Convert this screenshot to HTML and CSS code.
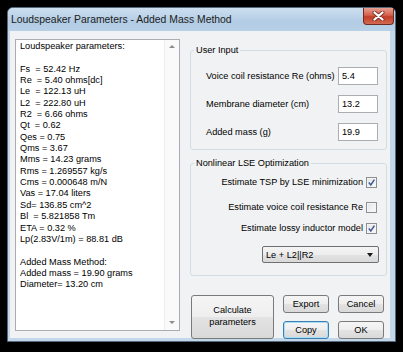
FILE: index.html
```html
<!DOCTYPE html>
<html lang="en">
<head>
    <meta charset="UTF-8">
    <title>Loudspeaker Parameters - Added Mass Method</title>
    <link rel="stylesheet" href="styles.css">
</head>
<body>
    <div class="window">
        <div class="titlebar">
            <span class="title">Loudspeaker Parameters - Added Mass Method</span>
            <span class="close-btn">
                <svg width="13" height="10" viewBox="0 0 13 10">
                    <path d="M2.5 1.5 L10.5 8.5 M10.5 1.5 L2.5 8.5" stroke="#7a3128" stroke-width="4" stroke-linecap="round"/>
                    <path d="M2.5 1.5 L10.5 8.5 M10.5 1.5 L2.5 8.5" stroke="#fff" stroke-width="2.3" stroke-linecap="round"/>
                </svg>
            </span>
        </div>
        <div class="client">
            <div class="results">
                <div class="results-text">Loudspeaker parameters:

Fs  = 52.42 Hz
Re  = 5.40 ohms[dc]
Le  = 122.13 uH
L2  = 222.80 uH
R2  = 6.66 ohms
Qt  = 0.62
Qes = 0.75
Qms = 3.67
Mms = 14.23 grams
Rms = 1.269557 kg/s
Cms = 0.000648 m/N
Vas = 17.04 liters
Sd= 136.85 cm^2
Bl  = 5.821858 Tm
ETA = 0.32 %
Lp(2.83V/1m) = 88.81 dB

Added Mass Method:
Added mass = 19.90 grams
Diameter= 13.20 cm</div>
                <div class="scrollbar">
                    <span class="arrow-up"></span>
                    <span class="arrow-down"></span>
                </div>
            </div>

            <div class="side">
                <fieldset class="group">
                    <legend>User Input</legend>
                    <div class="group-body inputs">
                        <div class="field-row">
                            <label>Voice coil resistance Re (ohms)</label>
                            <input type="text" value="5.4">
                        </div>
                        <div class="field-row">
                            <label>Membrane diameter (cm)</label>
                            <input type="text" value="13.2">
                        </div>
                        <div class="field-row">
                            <label>Added mass (g)</label>
                            <input type="text" value="19.9">
                        </div>
                    </div>
                </fieldset>

                <fieldset class="group lse">
                    <legend>Nonlinear LSE Optimization</legend>
                    <div class="group-body options">
                        <div class="check-row">
                            <span>Estimate TSP by LSE minimization</span>
                            <span class="checkbox"><svg width="9" height="9" viewBox="0 0 9 9"><path d="M1.8 4.6 L3.8 7 L7.4 1.6" fill="none" stroke="#3f5a98" stroke-width="1.5"/></svg></span>
                        </div>
                        <div class="check-row second">
                            <span>Estimate voice coil resistance Re</span>
                            <span class="checkbox"></span>
                        </div>
                        <div class="check-row third">
                            <span>Estimate lossy inductor model</span>
                            <span class="checkbox"><svg width="9" height="9" viewBox="0 0 9 9"><path d="M1.8 4.6 L3.8 7 L7.4 1.6" fill="none" stroke="#3f5a98" stroke-width="1.5"/></svg></span>
                        </div>
                        <div class="combo">
                            <span>Le + L2||R2</span>
                            <span class="combo-arrow"></span>
                        </div>
                    </div>
                </fieldset>

                <div class="buttons">
                    <button class="btn calc">Calculate<br>parameters</button>
                    <button class="btn">Export</button>
                    <button class="btn">Cancel</button>
                    <button class="btn default">Copy</button>
                    <button class="btn">OK</button>
                </div>
            </div>
        </div>
    </div>
</body>
</html>
```

FILE: styles.css
```css
* {
    box-sizing: border-box;
}
body {
    margin: 0;
    background: #000;
    font-family: "Liberation Sans", Arial, sans-serif;
    font-size: 9.2px;
    color: #000;
}
.window {
    margin: 7px 0 0 7px;
    width: 389px;
    height: 335px;
    border: 1px solid #56697a;
    border-radius: 6px 6px 0 0;
    background: #c3d7ea;
    display: flex;
    flex-direction: column;
}
.titlebar {
    height: 23px;
    display: flex;
    align-items: center;
    justify-content: space-between;
    padding-left: 3px;
    background: linear-gradient(#cddff0, #b2cce4 60%, #b9d1e7);
    border-radius: 5px 5px 0 0;
}
.title {
    font-size: 10.4px;
    color: #1c1c1c;
}
.close-btn {
    align-self: flex-start;
    width: 31px;
    height: 17px;
    margin-right: 1px;
    border: 1px solid #6e2b22;
    border-top: none;
    border-radius: 0 0 4px 4px;
    background: linear-gradient(#e7a093, #d4604c 45%, #c13c27 55%, #d26a52);
    display: flex;
    align-items: center;
    justify-content: center;
}

/* client area */
.client {
    margin: 0 5px 0 2px;
    height: 307px;
    background: #f1f2f3;
    display: flex;
    gap: 10px;
    padding: 8px 3px 7px 5px;
}
.results {
    width: 165px;
    height: 292px;
    border: 1px solid #abadb3;
    background: #fff;
    display: flex;
}
.results-text {
    flex: 1;
    padding: 1px 0 0 4px;
    white-space: pre;
    line-height: 11.35px;
}
.scrollbar {
    width: 15px;
    display: flex;
    flex-direction: column;
    justify-content: space-between;
    align-items: center;
    padding: 5px 0 6px;
    background: #fafafa;
    border-left: 1px solid #ececec;
}
.arrow-up {
    border-left: 3px solid transparent;
    border-right: 3px solid transparent;
    border-bottom: 3px solid #8c8c8c;
}
.arrow-down {
    border-left: 3px solid transparent;
    border-right: 3px solid transparent;
    border-top: 3px solid #8c8c8c;
}

/* right column */
.side {
    width: 197px;
    padding-top: 5px;
    display: flex;
    flex-direction: column;
}
.group {
    margin: 0;
    padding: 0;
    min-width: 0;
    border: 1px solid #d3dce3;
    border-radius: 3px;
}
.group legend {
    margin-left: 3px;
    padding: 0 2px;
    height: 12px;
    line-height: 12px;
}
.lse {
    margin-top: 7px;
}
.inputs {
    display: flex;
    flex-direction: column;
    gap: 10px;
    padding: 11px 8px 8px 15px;
}
.field-row {
    height: 18px;
    display: flex;
    align-items: center;
    justify-content: space-between;
}
.field-row input {
    width: 40px;
    height: 18px;
    border: 1px solid #abadb3;
    background: #fff;
    font: inherit;
    padding: 0 0 0 3px;
    color: #000;
}
.options {
    display: flex;
    flex-direction: column;
    padding: 6px 0 12px 0;
}
.check-row {
    height: 14px;
    display: flex;
    align-items: center;
    justify-content: flex-end;
    gap: 3px;
    padding-right: 9px;
}
.check-row.second {
    margin-top: 11px;
}
.check-row.third {
    margin-top: 7px;
}
.checkbox {
    width: 11px;
    height: 11px;
    border: 1px solid #8e8f8f;
    background: linear-gradient(135deg, #e4e4e4, #fbfbfb);
    box-shadow: inset 0 0 0 1px #f4f4f4;
    display: flex;
    align-items: center;
    justify-content: center;
}
.combo {
    align-self: flex-end;
    margin: 11px 7px 0 0;
    width: 117px;
    height: 17px;
    border: 1px solid #707070;
    border-radius: 2px;
    background: linear-gradient(#f4f4f4, #ededed 50%, #e2e2e2 51%, #d9d9d9);
    display: flex;
    align-items: center;
    justify-content: space-between;
    padding: 0 5px 0 3px;
}
.combo-arrow {
    border-left: 3.5px solid transparent;
    border-right: 3.5px solid transparent;
    border-top: 4px solid #1a1a1a;
}

/* buttons */
.buttons {
    margin: 19px 0 0 1px;
    display: grid;
    grid-template-columns: 83px 46px 46px;
    grid-template-rows: 18px 18px;
    column-gap: 9px;
    row-gap: 8px;
}
.btn {
    font: inherit;
    color: #000;
    padding: 0;
    border: 1px solid #7a7a7a;
    border-radius: 3px;
    background: linear-gradient(#f5f5f5, #eeeeee 50%, #e3e3e3 51%, #d9d9d9);
}
.btn.calc {
    grid-row: span 2;
    line-height: 11.7px;
}
.btn.default {
    border-color: #3c7fb1;
    box-shadow: inset 0 0 0 1px #a6def5;
}
```
